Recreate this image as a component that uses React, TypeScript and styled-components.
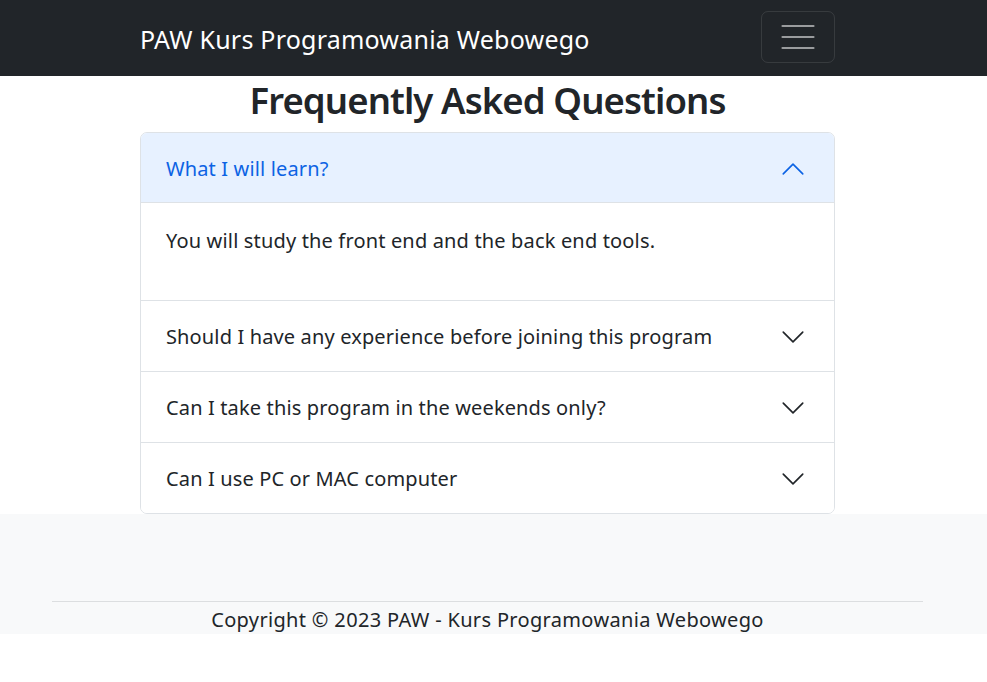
import React, { useState } from 'react';
import styled, { createGlobalStyle } from 'styled-components';

const GlobalStyle = createGlobalStyle`
  html, body { margin: 0; padding: 0; background: #ffffff; }
  body {
    font-family: "Noto Sans", "Open Sans", sans-serif;
    color: #212529;
  }
  *, *::before, *::after { box-sizing: border-box; }
`;

const Navbar = styled.nav`
  background: #212529;
  height: 76px;
  padding-right: 12px;
`;

const NavInner = styled.div`
  width: 695px;
  height: 100%;
  margin: 0 auto;
  display: flex;
  align-items: center;
  justify-content: space-between;
`;

const Brand = styled.a`
  color: #ffffff;
  font-size: 25px;
  line-height: 37px;
  margin-top: 2px;
  letter-spacing: 0.22px;
  text-decoration: none;
  white-space: nowrap;
`;

const Toggler = styled.button`
  width: 74px;
  height: 52px;
  margin-top: -2px;
  padding: 0;
  background: transparent;
  border: 1px solid rgba(255, 255, 255, 0.1);
  border-radius: 7px;
  display: flex;
  align-items: center;
  justify-content: center;
  cursor: pointer;
`;

const Main = styled.main`
  padding-right: 12px;
`;

const Container = styled.div`
  width: 695px;
  margin: 0 auto;
`;

const Title = styled.h1`
  margin: 0 0 8px;
  font-size: 36.5px;
  line-height: 48px;
  font-weight: 600;
  letter-spacing: -0.9px;
  text-align: center;
  color: #212529;
`;

const Accordion = styled.div`
  border: 1px solid #dee2e6;
  border-radius: 7px;
  overflow: hidden;
  background: #ffffff;
`;

const Item = styled.div<{ $first: boolean }>`
  border-top: ${(p) => (p.$first ? '0' : '1px solid #dee2e6')};
`;

const Header = styled.button<{ $open: boolean }>`
  width: 100%;
  height: 70px;
  display: flex;
  align-items: center;
  padding: 1px 28px 0 25px;
  border: 0;
  margin: 0;
  font-family: inherit;
  font-size: 20px;
  line-height: 30px;
  letter-spacing: 0.14px;
  text-align: left;
  cursor: pointer;
  background: ${(p) => (p.$open ? '#e7f1ff' : '#ffffff')};
  color: ${(p) => (p.$open ? '#0c63e4' : '#212529')};
  box-shadow: ${(p) => (p.$open ? 'inset 0 -1px 0 #dee2e6' : 'none')};
`;

const Chevron = styled.svg<{ $open: boolean }>`
  width: 26px;
  height: 26px;
  margin-left: auto;
  flex-shrink: 0;
  transform: ${(p) => (p.$open ? 'rotate(-180deg)' : 'none')};
`;

const Body = styled.div`
  padding: 23px 25px 24px;
  font-size: 20px;
  line-height: 30px;
  letter-spacing: 0.16px;
  color: #212529;
`;

const Paragraph = styled.p`
  margin: 0 0 20px;
`;

const Footer = styled.footer`
  background: #f8f9fa;
  padding: 87px 12px 0 0;
  height: 120px;
`;

const Rule = styled.hr`
  width: 871px;
  margin: 0 auto;
  border: 0;
  border-top: 1px solid #dcdee0;
`;

const Copyright = styled.p`
  margin: 3px 0 0;
  text-align: center;
  font-size: 20px;
  line-height: 30px;
  letter-spacing: 0.33px;
  color: #212529;
`;

const faqs = [
  { q: 'What I will learn?', a: 'You will study the front end and the back end tools.' },
  { q: 'Should I have any experience before joining this program', a: 'No previous experience is required.' },
  { q: 'Can I take this program in the weekends only?', a: 'Yes, weekend groups are available.' },
  { q: 'Can I use PC or MAC computer', a: 'You can use either of them.' },
];

export default function App() {
  const [open, setOpen] = useState<number>(0);
  return (
    <>
      <GlobalStyle />
      <Navbar>
        <NavInner>
          <Brand href="#">PAW Kurs Programowania Webowego</Brand>
          <Toggler aria-label="Toggle navigation">
            <svg width="34" height="26" viewBox="0 0 34 26">
              <g stroke="rgba(255,255,255,0.55)" strokeWidth="2.2" strokeLinecap="round">
                <line x1="1.5" y1="2" x2="32.5" y2="2" />
                <line x1="1.5" y1="13" x2="32.5" y2="13" />
                <line x1="1.5" y1="24" x2="32.5" y2="24" />
              </g>
            </svg>
          </Toggler>
        </NavInner>
      </Navbar>
      <Main>
        <Container>
          <Title>Frequently Asked Questions</Title>
          <Accordion>
            {faqs.map((f, i) => {
              const isOpen = open === i;
              return (
                <Item key={f.q} $first={i === 0}>
                  <Header $open={isOpen} onClick={() => setOpen(isOpen ? -1 : i)}>
                    {f.q}
                    <Chevron $open={isOpen} viewBox="0 0 16 16" fill="none">
                      <path
                        d="M2 5L8 11L14 5"
                        stroke={isOpen ? '#0c63e4' : '#212529'}
                        strokeWidth="1"
                        strokeLinecap="round"
                        strokeLinejoin="round"
                      />
                    </Chevron>
                  </Header>
                  {isOpen && (
                    <Body>
                      <Paragraph>{f.a}</Paragraph>
                    </Body>
                  )}
                </Item>
              );
            })}
          </Accordion>
        </Container>
      </Main>
      <Footer>
        <Rule />
        <Copyright>Copyright © 2023 PAW - Kurs Programowania Webowego</Copyright>
      </Footer>
    </>
  );
}
